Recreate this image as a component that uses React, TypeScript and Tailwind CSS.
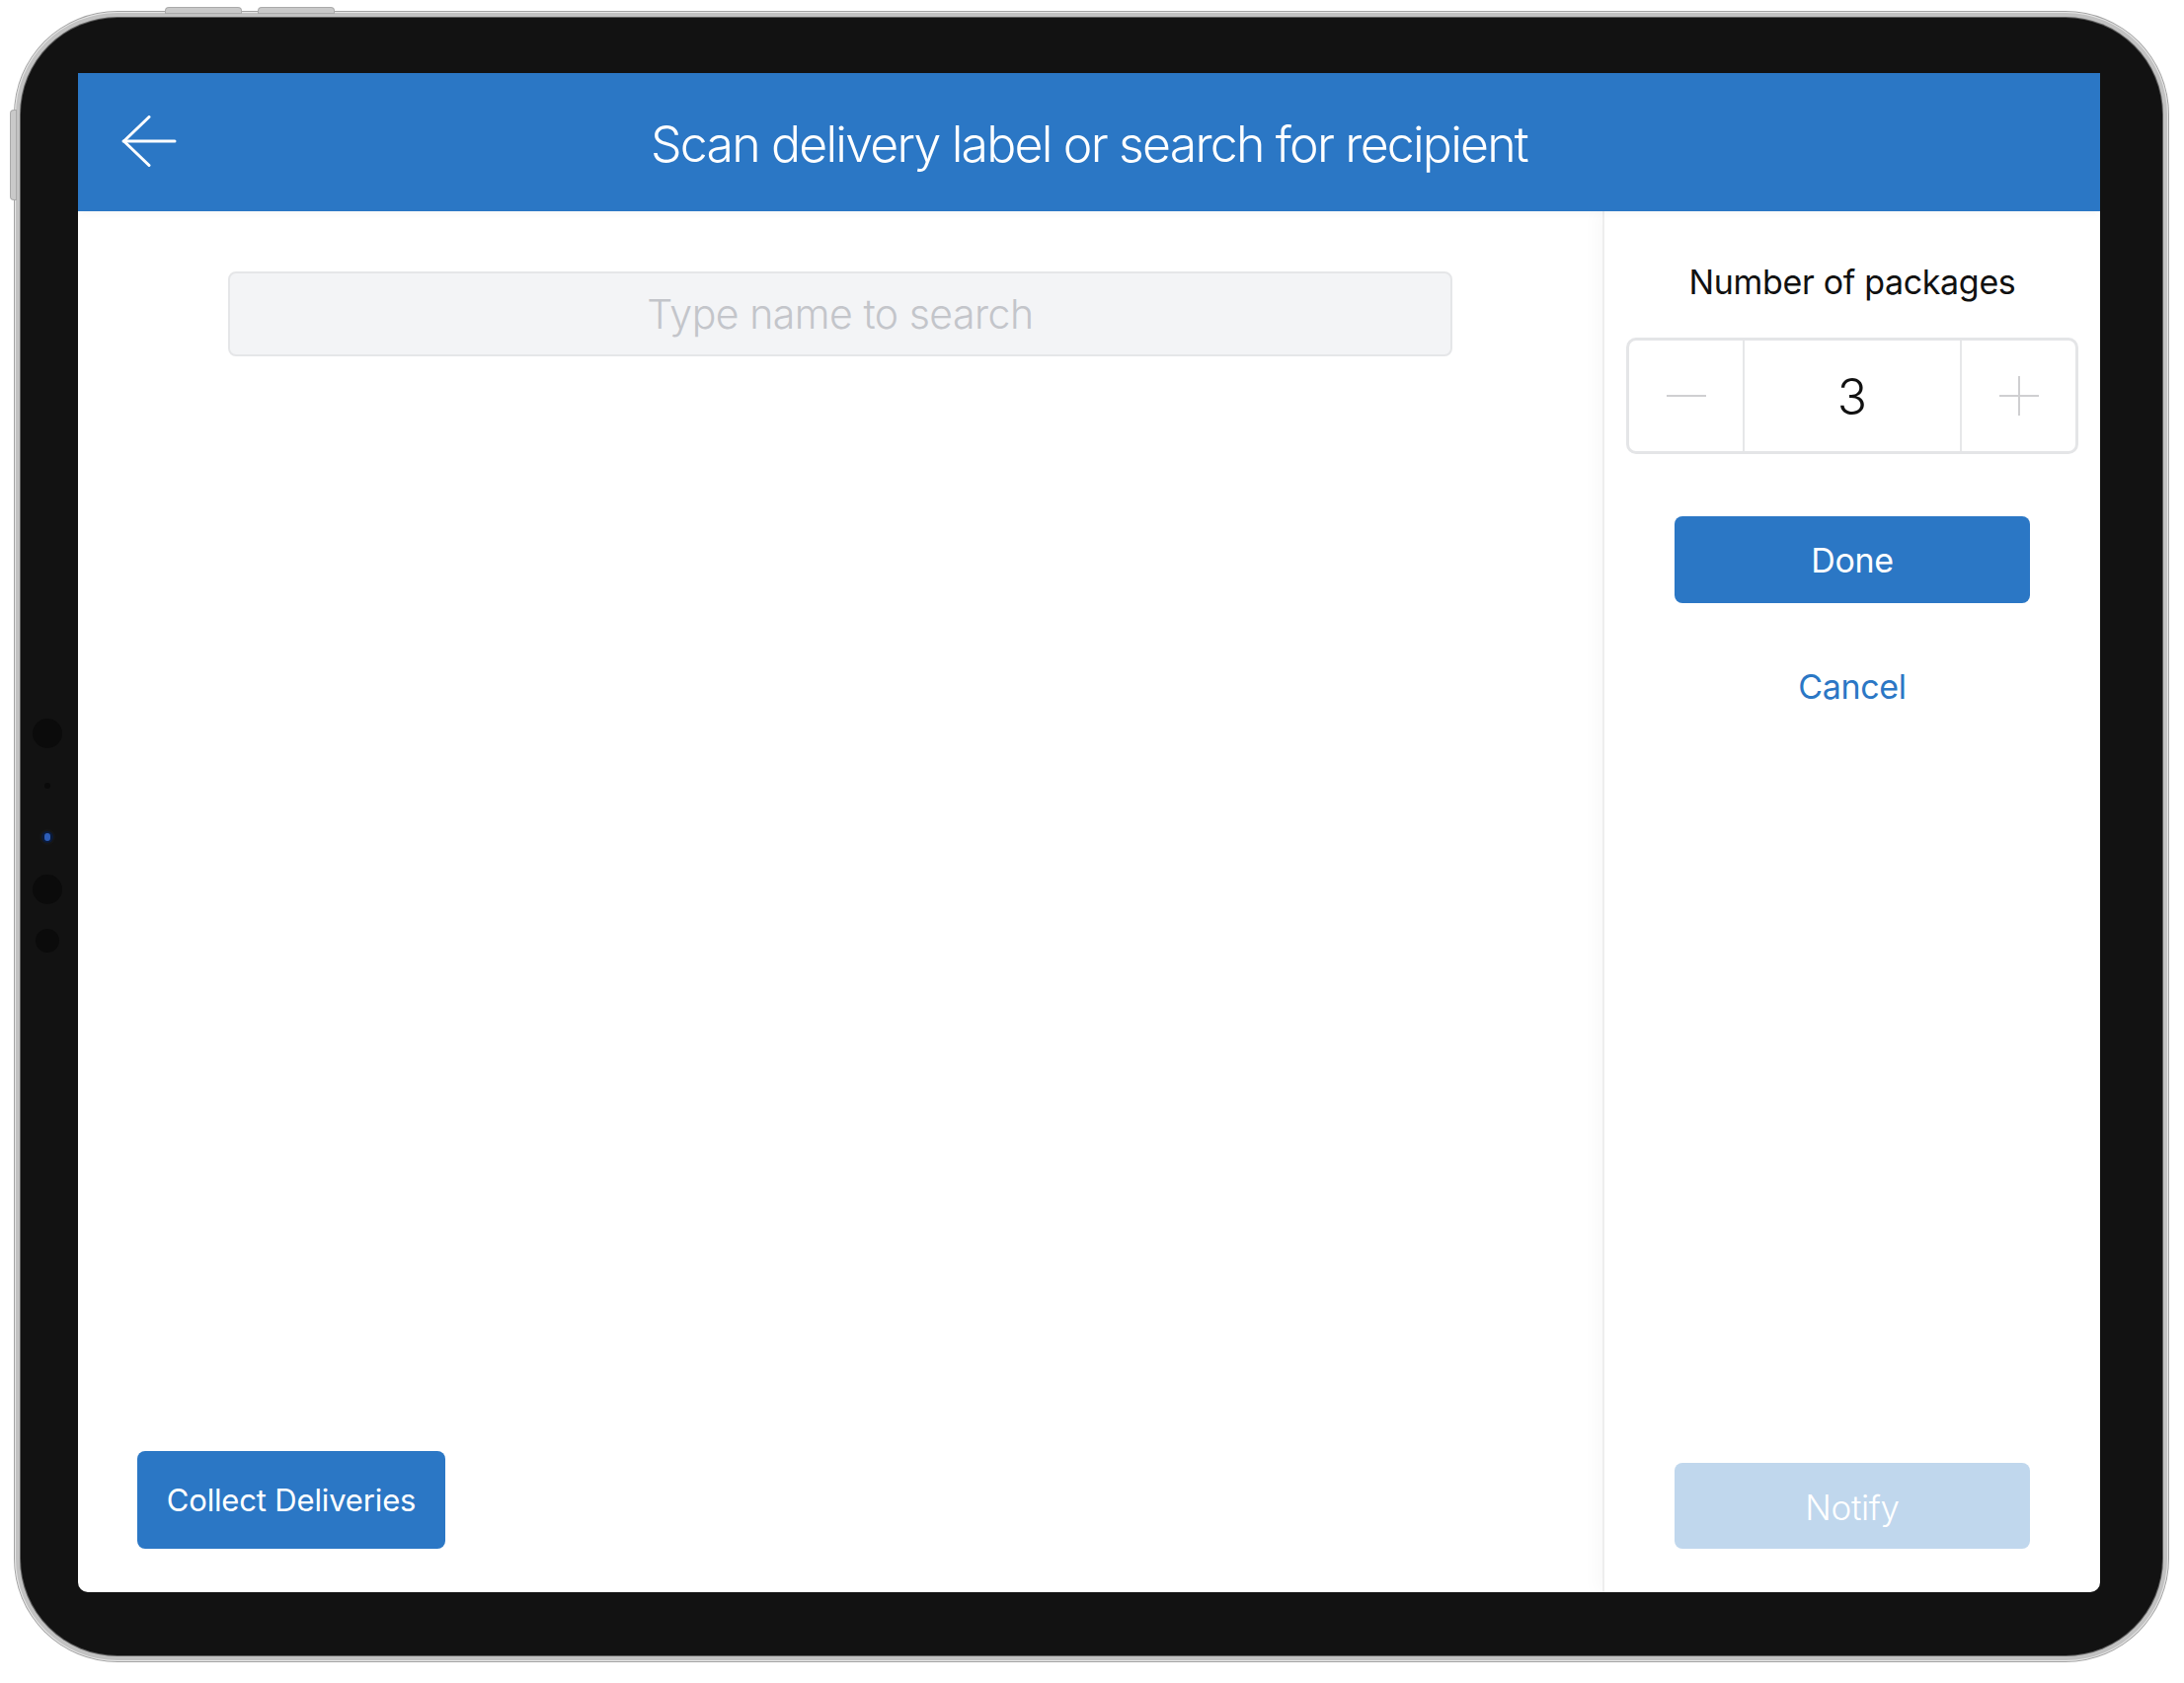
import React from "react";

function BackArrow() {
  return (
    <svg width="56" height="54" viewBox="0 0 56 54" fill="none">
      <path d="M2 26 H54" stroke="white" strokeWidth="3" strokeLinecap="round" />
      <path d="M28 1.5 L2.5 26 L28 50.5" stroke="white" strokeWidth="3" strokeLinecap="round" strokeLinejoin="round" />
    </svg>
  );
}

function Minus() {
  return (
    <svg width="42" height="4" viewBox="0 0 42 4">
      <path d="M1 2 H41" stroke="#cfcfd1" strokeWidth="2" />
    </svg>
  );
}

function Plus() {
  return (
    <svg width="42" height="42" viewBox="0 0 42 42">
      <path d="M1 21 H41 M21 1 V41" stroke="#cfcfd1" strokeWidth="2" />
    </svg>
  );
}

export default function App() {
  return (
    <div className="w-[2212px] h-[1705px] bg-white [font-family:Inter,'Noto_Sans',sans-serif] pl-[15px] pt-[12px]">
      {/* device frame */}
      <div className="relative w-[2181px] h-[1671px] rounded-[104px] bg-[#c2c2c2] p-[6px] shadow-[0_0_0_1px_#a3a3a3,inset_0_0_0_1px_#e6e6e6]">
        {/* hardware buttons */}
        <div className="absolute left-[153px] top-[-4px] w-[76px] h-[5px] rounded-t-[3px] bg-[#c9c9c9] shadow-[0_0_0_1px_#aaa]" />
        <div className="absolute left-[247px] top-[-4px] w-[76px] h-[5px] rounded-t-[3px] bg-[#c9c9c9] shadow-[0_0_0_1px_#aaa]" />
        <div className="absolute left-[-4px] top-[100px] w-[5px] h-[90px] rounded-l-[3px] bg-[#c9c9c9] shadow-[0_0_0_1px_#aaa]" />

        <div className="relative w-full h-full rounded-[98px] bg-[#121212] shadow-[0_0_0_1px_#5e5e5e] pl-[58px] pt-[56px]">
          {/* left bezel sensors */}
          <div className="absolute left-[12px] top-[710px] w-[30px] h-[30px] rounded-full bg-[#0b0b0b]" />
          <div className="absolute left-[24px] top-[775px] w-[6px] h-[6px] rounded-full bg-[#0a0a0a]" />
          <div className="absolute left-[21px] top-[824px] w-[12px] h-[12px] rounded-full bg-[#0a1a3a] shadow-[0_0_0_2px_#161616]">
            <div className="ml-[3px] mt-[2px] w-[6px] h-[8px] rounded-full bg-[#2d5db8]" />
          </div>
          <div className="absolute left-[12px] top-[868px] w-[30px] h-[30px] rounded-full bg-[#0b0b0b]" />
          <div className="absolute left-[15px] top-[923px] w-[24px] h-[24px] rounded-full bg-[#0b0b0b]" />

          {/* screen */}
          <div className="w-[2048px] h-[1539px] bg-white flex flex-col overflow-hidden rounded-b-[10px]">
            {/* header */}
            <div className="relative z-10 h-[140px] shrink-0 bg-[#2b77c5] grid grid-cols-[1fr_auto_1fr] items-center shadow-[0_2px_8px_rgba(0,0,0,0.04)]">
              <div className="pl-[44px] flex items-center">
                <BackArrow />
              </div>
              <div className="pt-[3px] text-white text-[50px] font-light tracking-[-0.036em] leading-none whitespace-nowrap">
                Scan delivery label or search for recipient
              </div>
              <div />
            </div>

            {/* body */}
            <div className="flex flex-1 min-h-0">
              {/* main */}
              <div className="flex-1 flex flex-col">
                <div className="mx-auto mt-[61px] w-[1240px] h-[86px] rounded-[8px] border-2 border-[#e5e6e8] bg-[#f3f4f6] flex items-center justify-center">
                  <input
                    readOnly
                    placeholder="Type name to search"
                    className="w-full bg-transparent text-center text-[41px] font-light tracking-[-0.012em] outline-none placeholder:text-[#c3c5ca] pt-[2px]"
                  />
                </div>
                <div className="flex-1" />
                <button className="ml-[60px] mb-[44px] w-[312px] h-[99px] rounded-[8px] bg-[#2b77c5] text-white text-[31px] tracking-[-0.005em] pt-[2px]">
                  Collect Deliveries
                </button>
              </div>

              {/* sidebar */}
              <div className="w-[504px] shrink-0 border-l-2 border-[#eeeeee] shadow-[-8px_0_14px_rgba(0,0,0,0.025)] flex flex-col items-center">
                <div className="mt-[52px] h-[40px] leading-[40px] text-[34px] text-[#111] tracking-[-0.01em]">
                  Number of packages
                </div>
                <div className="mt-[36px] w-[458px] h-[118px] rounded-[10px] border-[3px] border-[#e4e5e7] flex">
                  <div className="w-[117px] flex items-center justify-center border-r-2 border-[#e6e7e9]">
                    <Minus />
                  </div>
                  <div className="flex-1 flex items-center justify-center text-[50px] font-light text-[#111] leading-none pt-[2px]">
                    3
                  </div>
                  <div className="w-[117px] flex items-center justify-center border-l-2 border-[#e6e7e9]">
                    <Plus />
                  </div>
                </div>
                <button className="mt-[63px] w-[360px] h-[88px] rounded-[8px] bg-[#2b77c5] text-white text-[34px] tracking-[-0.01em]">
                  Done
                </button>
                <button className="mt-[63px] h-[44px] leading-[44px] text-[34px] text-[#2b77c5] tracking-[-0.01em]">
                  Cancel
                </button>
                <div className="flex-1" />
                <button className="mb-[44px] w-[360px] h-[87px] rounded-[8px] bg-[#c0d7ed] text-white text-[35px] font-light tracking-[-0.01em] pt-[3px]">
                  Notify
                </button>
              </div>
            </div>
          </div>
        </div>
      </div>
    </div>
  );
}
